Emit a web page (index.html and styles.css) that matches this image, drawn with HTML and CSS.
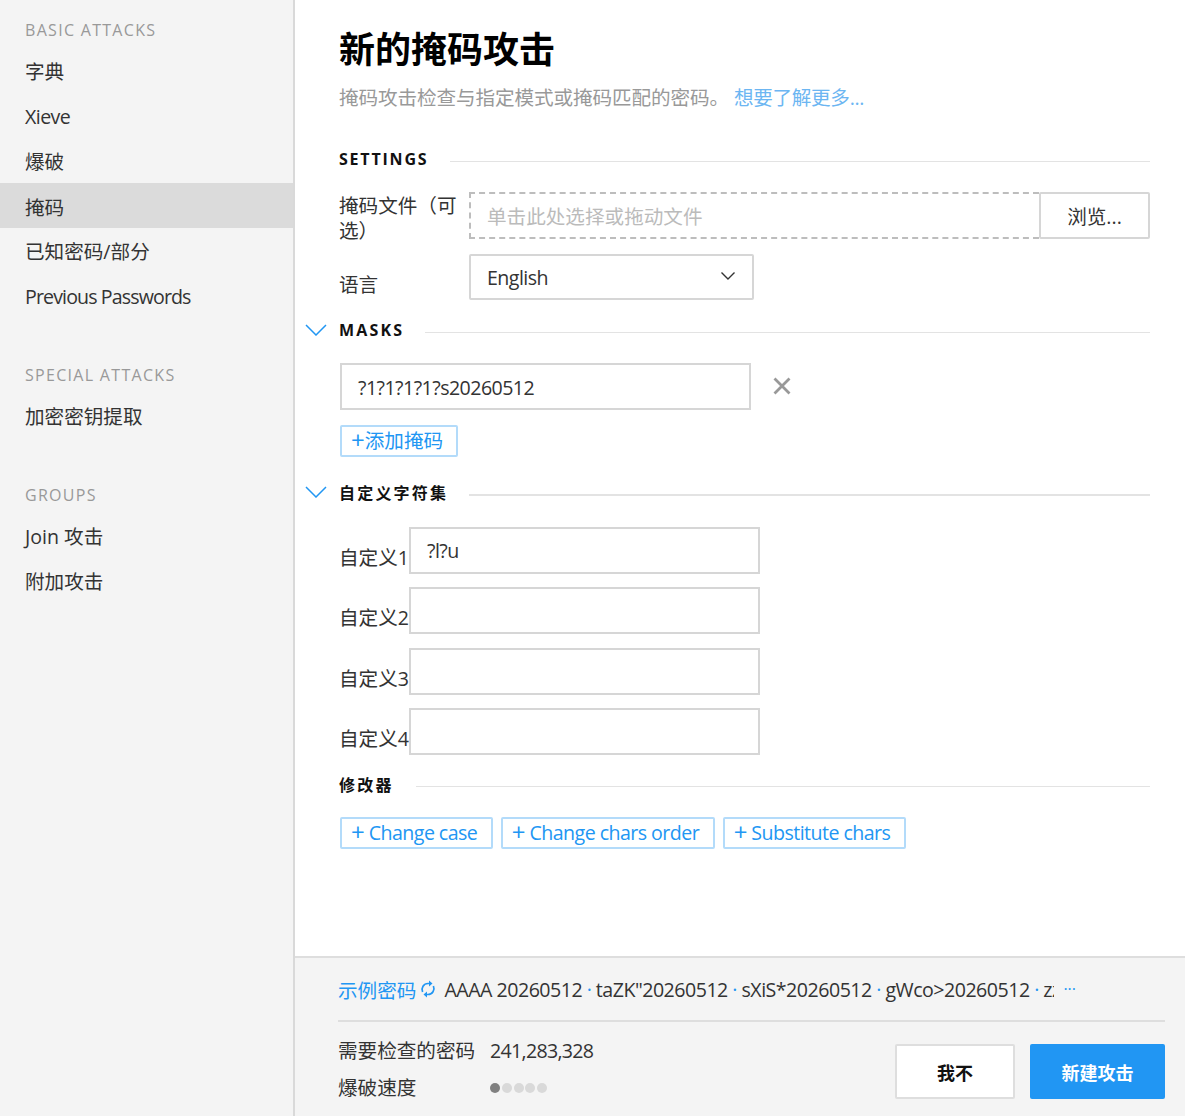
FILE: index.html

```html
<!DOCTYPE html>
<html lang="zh">
<head>
  <meta charset="utf-8">
  <title>新的掩码攻击</title>
  <link rel="stylesheet" href="styles.css">
</head>
<body>
  <div class="app">
    <!-- left navigation -->
    <nav class="sidebar">
      <div class="nav-title">BASIC ATTACKS</div>
      <a class="nav-item">字典</a>
      <a class="nav-item en">Xieve</a>
      <a class="nav-item">爆破</a>
      <a class="nav-item active">掩码</a>
      <a class="nav-item">已知密码/部分</a>
      <a class="nav-item en-nav">Previous Passwords</a>
      <div class="nav-title nav-gap">SPECIAL ATTACKS</div>
      <a class="nav-item">加密密钥提取</a>
      <div class="nav-title nav-gap">GROUPS</div>
      <a class="nav-item">Join 攻击</a>
      <a class="nav-item">附加攻击</a>
    </nav>

    <main class="main">
      <div class="content">
        <h1 class="title">新的掩码攻击</h1>
        <p class="subtitle">掩码攻击检查与指定模式或掩码匹配的密码。 <a class="link">想要了解更多...</a></p>

        <div class="section section-settings">
          <span class="section-name">SETTINGS</span>
          <span class="section-line"></span>
        </div>
        <div class="file-row">
          <label class="file-label">掩码文件（可选）</label>
          <div class="dropzone">单击此处选择或拖动文件</div>
          <button class="browse">浏览...</button>
        </div>
        <div class="lang-row">
          <label class="lang-label">语言</label>
          <div class="select">
            <span class="en">English</span>
            <svg class="select-arrow" width="16" height="10" viewBox="0 0 16 10"><path d="M1.500 1.500 8 8l6.500-6.500" fill="none" stroke="#333" stroke-width="1.400"/></svg>
          </div>
        </div>

        <div class="section section-masks">
          <svg class="chevron" width="22" height="12" viewBox="0 0 22 12"><path d="M1 1l10 10L21 1" fill="none" stroke="#2196f3" stroke-width="1.500"/></svg>
          <span class="section-name">MASKS</span>
          <span class="section-line"></span>
        </div>
        <div class="mask-row">
          <div class="input mask-input en">?1?1?1?1?s20260512</div>
          <svg class="remove" width="18" height="18" viewBox="0 0 18 18"><path d="M1.500 1.500l15 15M16.500 1.500l-15 15" stroke="#999" stroke-width="2.800"/></svg>
        </div>
        <button class="add-btn add-mask"><span class="plus">+</span>添加掩码</button>

        <div class="section section-charset">
          <svg class="chevron" width="22" height="12" viewBox="0 0 22 12"><path d="M1 1l10 10L21 1" fill="none" stroke="#2196f3" stroke-width="1.500"/></svg>
          <span class="section-name">自定义字符集</span>
          <span class="section-line thick"></span>
        </div>
        <div class="charset-list">
          <div class="charset-row"><label>自定义1</label><div class="input charset-input en">?l?u</div></div>
          <div class="charset-row"><label>自定义2</label><div class="input charset-input"></div></div>
          <div class="charset-row"><label>自定义3</label><div class="input charset-input"></div></div>
          <div class="charset-row"><label>自定义4</label><div class="input charset-input"></div></div>
        </div>

        <div class="section section-mods">
          <span class="section-name">修改器</span>
          <span class="section-line"></span>
        </div>
        <div class="mod-buttons">
          <button class="add-btn mod-btn en"><span class="plus">+</span> Change case</button>
          <button class="add-btn mod-btn en"><span class="plus">+</span> Change chars order</button>
          <button class="add-btn mod-btn en"><span class="plus">+</span> Substitute chars</button>
        </div>
      </div>

      <footer class="footer">
        <div class="samples">
          <a class="samples-label">示例密码</a>
          <svg class="refresh" width="16" height="18" viewBox="0 0 16 18"><path d="M2.600 12A6 6 0 0 1 8 3.500h1M13.400 6A6 6 0 0 1 8 14.500H7" fill="none" stroke="#2196f3" stroke-width="1.700"/><path d="M9 0.500l3.500 3L9 6.500zM7 11.500l-3.500 3 3.500 3z" fill="#2196f3"/></svg>
          <div class="samples-text">AAAA 20260512<i>·</i>taZK"20260512<i>·</i>sXiS*20260512<i>·</i>gWco&gt;20260512<i>·</i>zzXy!20260512</div>
          <span class="samples-more">···</span>
        </div>
        <div class="footer-bottom">
          <div class="stats">
            <div class="stat"><span class="stat-name">需要检查的密码</span><span class="stat-value">241,283,328</span></div>
            <div class="stat"><span class="stat-name">爆破速度</span>
              <span class="speed"><b class="on"></b><b></b><b></b><b></b><b></b></span>
            </div>
          </div>
          <div class="actions">
            <button class="btn-cancel">我不</button>
            <button class="btn-primary">新建攻击</button>
          </div>
        </div>
      </footer>
    </main>
  </div>
</body>
</html>
```

FILE: styles.css

```css
* {
  box-sizing: border-box;
}
body {
  margin: 0;
  overflow: hidden;
  font-family: "Open Sans", "Noto Sans CJK SC", sans-serif;
  font-size: 19.6px;
  color: #333;
  background-color: #fff;
}
button {
  font-family: inherit;
  font-size: inherit;
  cursor: pointer;
}
.en {
  letter-spacing: -0.55px;
}
.app {
  display: flex;
  height: 100vh;
}

/* sidebar */
.sidebar {
  width: 295px;
  flex: none;
  padding-top: 20px;
  background-color: #f4f4f4;
  border-right: 2px solid #d9d9d9;
}
.nav-title {
  height: 28px;
  padding-left: 25px;
  line-height: 20px;
  font-size: 16px;
  letter-spacing: 1.300px;
  color: #999;
}
.nav-gap {
  margin-top: 47px;
}
.nav-item {
  display: block;
  height: 45px;
  padding-left: 25px;
  line-height: 47px;
  color: #333;
}
.nav-item.en-nav {
  letter-spacing: -0.88px;
}
.nav-item.active {
  background-color: #dbdbdb;
  line-height: 49px;
}

/* main */
.main {
  flex: 1;
  display: flex;
  flex-direction: column;
  min-width: 0;
}
.content {
  flex: 1;
  min-height: 0;
  padding: 0 35px 0 44px;
}
.title {
  margin: 27px 0 0;
  font-size: 36px;
  line-height: 46px;
  font-weight: 700;
  color: #000;
}
.subtitle {
  margin: 1px 0 0;
  line-height: 48px;
  color: #999;
  letter-spacing: -0.1px;
  white-space: nowrap;
}
.link {
  color: #6cb6f2;
  letter-spacing: -0.3px;
}

/* section headings */
.section {
  position: relative;
  display: flex;
  align-items: center;
  gap: 22px;
  height: 24px;
}
.section-name {
  font-size: 16px;
  font-weight: 700;
  letter-spacing: 2.200px;
  color: #111;
}
.section-line {
  flex: 1;
  height: 1px;
  margin-top: 4px;
  background-color: #e3e3e3;
}
.section-line.thick {
  height: 2px;
  margin-top: 6px;
}
.chevron {
  position: absolute;
  left: -34px;
  top: 6px;
}
.section-settings {
  margin-top: 25px;
}
.section-settings .section-name {
  letter-spacing: 1.800px;
}
.section-masks {
  gap: 21px;
  margin-top: 18px;
}
.section-charset {
  gap: 21px;
  margin-top: 23px;
}
.section-mods {
  margin-top: 17.330px;
}
.section-mods .section-line {
  margin-top: 5px;
}

/* settings form */
.file-row {
  display: flex;
  margin-top: 21px;
  height: 47px;
}
.file-label {
  width: 130px;
  padding-top: 1px;
  line-height: 25px;
}
.dropzone {
  flex: 1;
  border: 2px dashed #bdbdbd;
  border-right: none;
  padding-left: 16px;
  line-height: 46px;
  color: #bbb;
}
.browse {
  width: 111px;
  background-color: #fff;
  border: 2px solid #d6d6d6;
  border-radius: 2px;
  color: #333;
}
.lang-row {
  display: flex;
  height: 46px;
  margin-top: 15px;
}
.lang-label {
  width: 130px;
  line-height: 62px;
}
.select {
  display: flex;
  justify-content: space-between;
  align-items: center;
  width: 285px;
  height: 46px;
  padding: 0 16px;
  border: 2px solid #d6d6d6;
  border-radius: 2px;
}
.select-arrow {
  margin-top: -2px;
}

/* inputs */
.input {
  height: 47px;
  padding-left: 16px;
  border: 2px solid #d6d6d6;
  line-height: 46px;
  background-color: #fff;
}
.mask-row {
  display: flex;
  align-items: center;
  gap: 22px;
  margin: 21px 0 0 1px;
}
.mask-input {
  width: 411px;
}
.remove {
  margin-top: -2px;
}
.add-btn {
  height: 32px;
  padding: 0 13px 0 9px;
  background-color: #fff;
  border: 2px solid #b3dbfa;
  border-radius: 2px;
  color: #2196f3;
  line-height: 28px;
  white-space: nowrap;
}
.plus {
  font-size: 24px;
  line-height: 0;
  vertical-align: -1px;
}
.add-mask {
  display: block;
  margin: 15px 0 0 1px;
}

/* custom charsets */
.charset-list {
  margin-top: 23px;
}
.charset-row {
  display: flex;
  height: 47px;
  margin-bottom: 13.330px;
}
.charset-row label {
  width: 70px;
  line-height: 62px;
  white-space: nowrap;
}
.charset-input {
  width: 351px;
  line-height: 43px;
}
.mod-buttons {
  display: flex;
  gap: 7.500px;
  margin: 21px 0 0 1px;
}
.mod-btn {
  padding: 0 14px 0 9px;
}

/* footer */
.footer {
  flex: none;
  height: 160px;
  padding: 0 20px 0 43px;
  background-color: #f4f4f4;
  border-top: 2px solid #dedede;
}
.samples {
  display: flex;
  align-items: center;
  height: 64px;
  border-bottom: 2px solid #dedede;
}
.samples-label {
  color: #2196f3;
}
.refresh {
  margin-left: 4px;
}
.samples-text {
  width: 610px;
  margin-left: 8px;
  overflow: hidden;
  white-space: nowrap;
  letter-spacing: -0.5px;
}
.samples-text i {
  margin: 0 4.500px;
  font-style: normal;
  color: #2196f3;
}
.samples-more {
  margin-left: 9px;
  color: #2196f3;
  font-size: 16px;
}
.footer-bottom {
  display: flex;
  justify-content: space-between;
  padding-top: 10px;
}
.stat {
  display: flex;
  height: 37px;
  line-height: 37px;
}
.stat-name {
  width: 152px;
}
.stat-value {
  letter-spacing: -0.7px;
}
.speed {
  display: flex;
  align-items: center;
  gap: 1.750px;
}
.speed b {
  width: 10px;
  height: 10px;
  border-radius: 50%;
  background-color: #d9d9d9;
}
.speed b.on {
  background-color: #808080;
}
.actions {
  display: flex;
  gap: 15px;
  padding-top: 12px;
}
.btn-cancel,
.btn-primary {
  height: 55px;
  font-size: 18px;
  font-weight: 700;
  border-radius: 2px;
}
.btn-cancel {
  width: 120px;
  background-color: #fff;
  border: 2px solid #dedede;
  color: #111;
}
.btn-primary {
  width: 135px;
  background-color: #2196f3;
  border: none;
  color: #fff;
}
```
